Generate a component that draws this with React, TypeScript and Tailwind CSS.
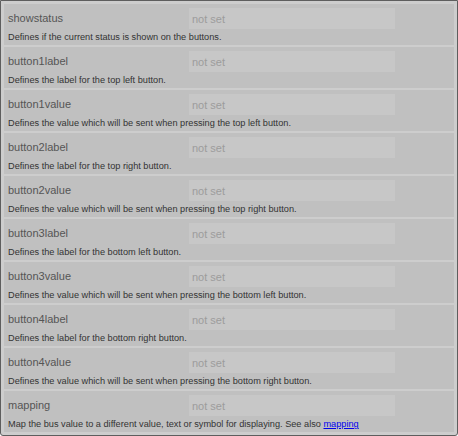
const rows: { name: string; desc: React.ReactNode }[] = [
  { name: "showstatus", desc: "Defines if the current status is shown on the buttons." },
  { name: "button1label", desc: "Defines the label for the top left button." },
  { name: "button1value", desc: "Defines the value which will be sent when pressing the top left button." },
  { name: "button2label", desc: "Defines the label for the top right button." },
  { name: "button2value", desc: "Defines the value which will be sent when pressing the top right button." },
  { name: "button3label", desc: "Defines the label for the bottom left button." },
  { name: "button3value", desc: "Defines the value which will be sent when pressing the bottom left button." },
  { name: "button4label", desc: "Defines the label for the bottom right button." },
  { name: "button4value", desc: "Defines the value which will be sent when pressing the bottom right button." },
  {
    name: "mapping",
    desc: (
      <>
        Map the bus value to a different value, text or symbol for displaying. See also{" "}
        <a href="#" className="text-[#0000ee] underline">
          mapping
        </a>
      </>
    ),
  },
];

export default function App() {
  return (
    <div className="w-[458px] h-[436px] bg-white font-['Liberation_Sans',Arial,sans-serif]">
      <div className="h-full border border-[#5e5e5e] rounded-b-[3px] bg-[#cdcdcd] p-[3px] flex flex-col gap-[2px]">
        {rows.map((r) => (
          <div key={r.name} className="h-[41px] bg-[#c0c0c0] pl-[4px] pt-[4px] flex flex-col">
            <div className="flex items-center h-[21px]">
              <span className="w-[181px] text-[11px] text-[#555]">{r.name}</span>
              <input
                placeholder="not set"
                className="w-[206px] h-[21px] bg-[#c7c7c7] px-[3px] text-[11px] text-[#999] placeholder:text-[#9c9c9c] outline-none"
              />
            </div>
            <div className="mt-[3px] text-[9.2px] leading-[11px] text-[#333]">{r.desc}</div>
          </div>
        ))}
      </div>
    </div>
  );
}
